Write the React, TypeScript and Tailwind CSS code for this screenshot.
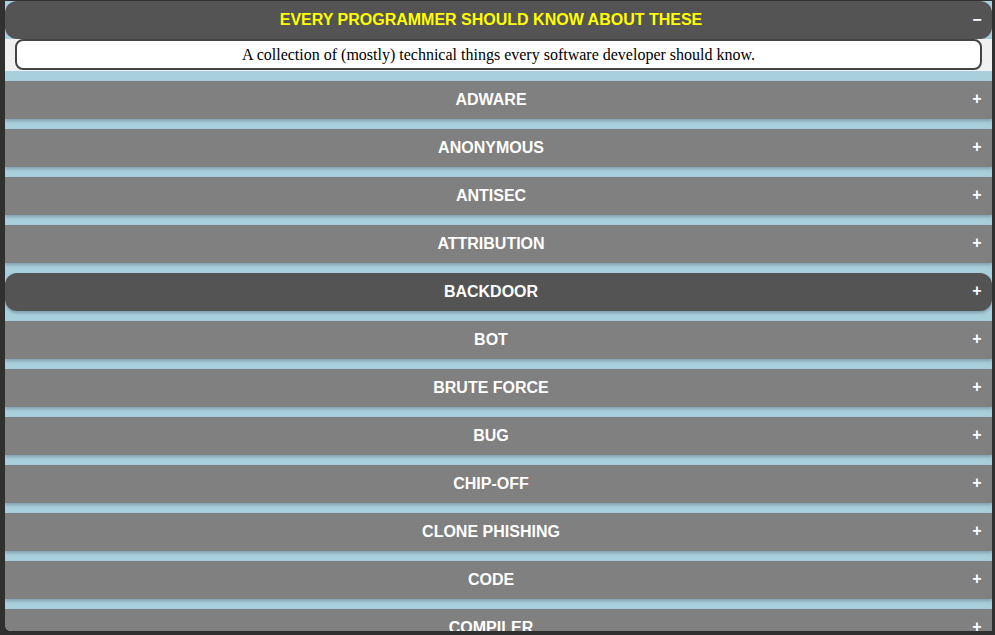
import { useState } from "react";

const topics = [
  "ADWARE",
  "ANONYMOUS",
  "ANTISEC",
  "ATTRIBUTION",
  "BACKDOOR",
  "BOT",
  "BRUTE FORCE",
  "BUG",
  "CHIP-OFF",
  "CLONE PHISHING",
  "CODE",
  "COMPILER",
];

function Row({ label, active }: { label: string; active: boolean }) {
  return (
    <div
      className={`flex items-center h-[38px] shrink-0 pl-[5px] pr-[10px] shadow-[0_2px_3px_rgba(0,0,0,0.22)] ${
        active ? "bg-[#545454] rounded-[12px]" : "bg-[#808080]"
      }`}
    >
      <span className="flex-1 text-center text-white font-bold text-[16px]">{label}</span>
      <span className="w-[10px] flex items-center justify-center text-white font-bold text-[16px] leading-none -mt-[2px]">+</span>
    </div>
  );
}

export default function App() {
  const [hover] = useState("BACKDOOR");

  return (
    <div
      className="h-screen bg-[#303030] pt-[1px] pl-[5px] pr-[3px] pb-[4px]"
      style={{ fontFamily: '"Liberation Sans", Arial, sans-serif' }}
    >
      <div className="h-full bg-[#a7cfdc] overflow-hidden rounded-bl-[6px] flex flex-col">
        {/* HEADER */}
        <div className="flex items-center h-[38px] shrink-0 bg-[#545454] rounded-[12px] pl-[5px] pr-[10px]">
          <span className="flex-1 text-center text-[#ffff00] font-bold text-[16px]">
            EVERY PROGRAMMER SHOULD KNOW ABOUT THESE
          </span>
          <span className="w-[10px] text-center text-white font-bold text-[16px] leading-none">−</span>
        </div>
        <div className="bg-[#f0f0f0] pl-[10px] pr-[10px] pb-[1px] shrink-0">
          <div
            className="h-[31px] bg-white border-2 border-[#444] rounded-[8px] flex items-center justify-center text-black text-[16px] pt-[1px]"
            style={{ fontFamily: '"Liberation Serif", "Times New Roman", serif' }}
          >
            A collection of (mostly) technical things every software developer should know.
          </div>
        </div>

        {/* LIST */}
        <div className="flex flex-col gap-[10px] pt-[10px]">
          {topics.map((t) => (
            <Row key={t} label={t} active={t === hover} />
          ))}
        </div>
      </div>
    </div>
  );
}
